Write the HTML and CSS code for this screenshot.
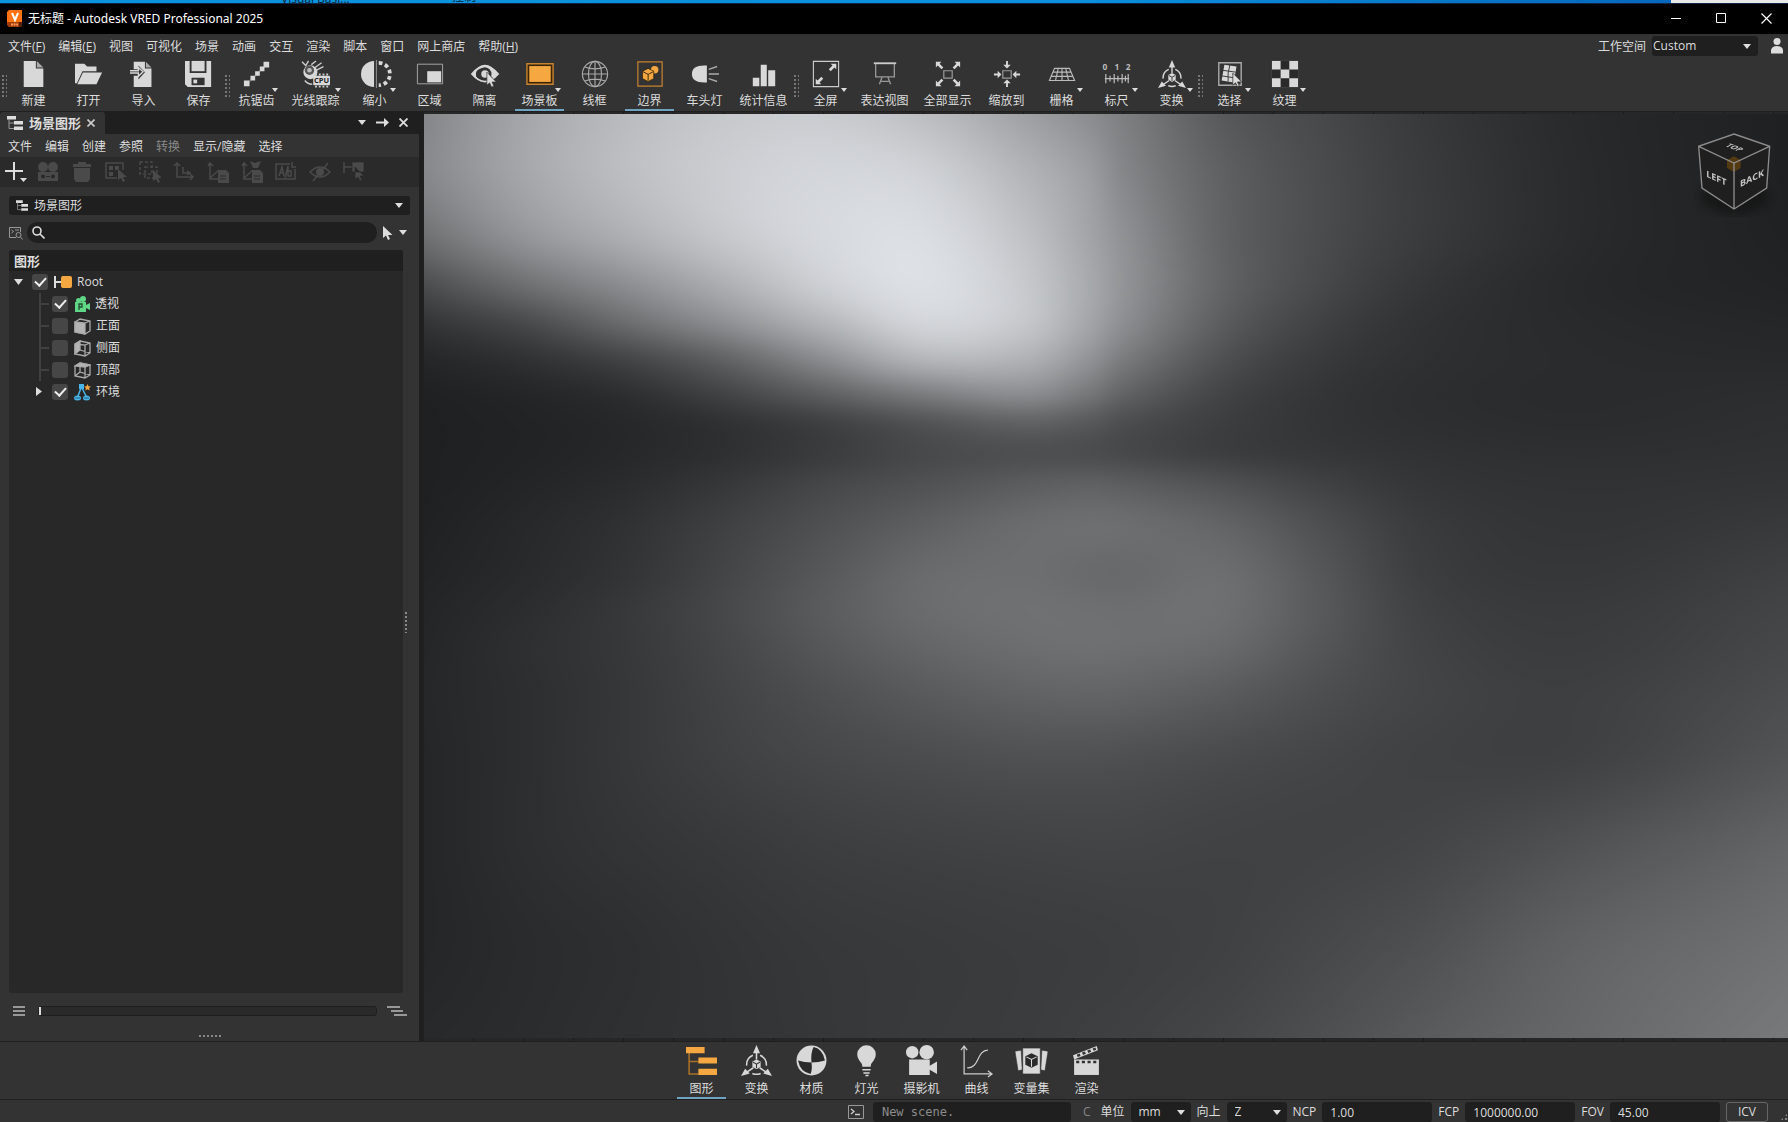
FILE: index.html
```html
<!DOCTYPE html>
<html lang="zh-CN">
<head>
<meta charset="utf-8">
<title>无标题 - Autodesk VRED Professional 2025</title>
<link rel="stylesheet" href="styles.css">
</head>
<body>
<svg class="defs" width="0" height="0" aria-hidden="true">
  <symbol id="i-transform" viewBox="0 0 30 30">
    <path d="M15 0l3.400 8h-6.800zM0 30l4-7 4.500 4.500zM30 30l-4-7-4.500 4.500z" fill="#d8d8d8"/>
    <path d="M15 7v7M6 26l6-4M24 26l-6-4" stroke="#d8d8d8" stroke-width="1.500"/>
    <path d="M11.500 10A10 10 0 0 0 5.500 20M18.500 10a10 10 0 0 1 6 10M11 27.500a10 10 0 0 0 8 0" fill="none" stroke="#d8d8d8" stroke-width="1.500"/>
    <path d="M15 14l4 2v5l-4 2.500-4-2.500v-5z" fill="#d8d8d8"/>
    <path d="M11.500 16.500l3.500 2 3.500-2M15 18.500v4" fill="none" stroke="#333" stroke-width="1"/>
  </symbol>
  <symbol id="i-tree" viewBox="0 0 16 14">
    <path d="M0 0h9v3.500H0zM7 5h9v3.500H7zM7 10.500h9V14H7z" fill="#ddd"/>
    <path d="M2 3v9.500h5M2 7h5" fill="none" stroke="#999"/>
  </symbol>
  <symbol id="i-cursor" viewBox="0 0 10 14">
    <path d="M0 0v12l3-2.500L5 14l2-1-2-4h4.500z" fill="currentColor"/>
  </symbol>
</svg>

<div class="app">
  <div class="desktop" aria-hidden="true"><span class="desk-a">Visual Basi...</span><span class="desk-b">控制</span><i class="desk-white"></i></div>

  <header class="titlebar">
    <svg class="logo" viewBox="0 0 15 17"><path d="M2 0h13v12H0V2z" fill="#ff7314"/><path d="M0 12h15v5H2l-2-2z" fill="#a33c08"/><path d="M12 12h3v5h-3z" fill="#5c1f04"/><path d="M5 3l3 7 3-7" fill="none" stroke="#fff" stroke-width="2"/><path d="M4 14.500h7" stroke="#ff9a55" stroke-width="2" stroke-dasharray="2 .6"/></svg>
    <h1>无标题 - Autodesk VRED Professional 2025</h1>
    <div class="winbtns">
      <button aria-label="最小化"><svg width="11" height="11" viewBox="0 0 11 11"><path d="M0 5.500h10" stroke="#fff"/></svg></button>
      <button aria-label="最大化"><svg width="11" height="11" viewBox="0 0 11 11"><path d="M.5.5h9v9h-9z" stroke="#fff" fill="none"/></svg></button>
      <button aria-label="关闭"><svg width="11" height="11" viewBox="0 0 11 11"><path d="M.5.5l10 10M10.500.5l-10 10" stroke="#fff" stroke-width="1.200"/></svg></button>
    </div>
  </header>

  <div class="menubar">
    <nav class="menu">
      <button>文件(<u>F</u>)</button><button>编辑(<u>E</u>)</button><button>视图</button><button>可视化</button><button>场景</button><button>动画</button><button>交互</button><button>渲染</button><button>脚本</button><button>窗口</button><button>网上商店</button><button>帮助(<u>H</u>)</button>
    </nav>
    <div class="workspace">
      <label for="ws">工作空间</label>
      <select id="ws"><option>Custom</option></select>
      <button class="user" aria-label="用户"><svg width="12" height="16" viewBox="0 0 12 16"><circle cx="6" cy="3.500" r="3.500" fill="#ddd"/><path d="M0 15.500V12q1-4 6-4t6 4v3.500z" fill="#ddd"/></svg></button>
    </div>
  </div>

  <div class="toolbar">
    <div class="group"><i class="grip"></i>
      <button class="tool"><svg viewBox="0 0 30 30"><path d="M4 1h13v8h8V29H4z" fill="#d8d8d8"/><path d="M18 1l7 7h-7z" fill="#aaa"/></svg>新建</button>
      <button class="tool"><svg viewBox="0 0 30 30"><path d="M0 4h10l3 3h10v5H8L2 25H0z" fill="#d8d8d8"/><path d="M8.500 13.500H29L23 26H2.500z" fill="#d8d8d8"/></svg>打开</button>
      <button class="tool"><svg viewBox="0 0 30 30"><path d="M4 2h12v7h7v20H4V17h5v4l7-8-7-7v4H4z" fill="#d8d8d8"/><path d="M17 2l6 6h-6z" fill="#aaa"/><path d="M0 11.500h9V8l5 4.500-5 5V14H0" fill="#333" stroke="#d8d8d8" stroke-width="1.500"/></svg>导入</button>
      <button class="tool"><svg viewBox="0 0 30 30"><path d="M0 1h5v13h18V1h5v28H3l-3-3z" fill="#d8d8d8"/><path d="M7 1h14v11H7z" fill="#d8d8d8"/><path d="M7 19h14v8H7z" fill="#333"/><path d="M9 21h4v4H9z" fill="#d8d8d8"/></svg>保存</button>
    </div>
    <div class="group"><i class="grip"></i>
      <button class="tool drop"><svg viewBox="0 0 30 30"><path d="M4 26L26 4" stroke="#555" stroke-width="2"/><path d="M1 22h6v6H1zM8 17h5v5H8zM13 12h5v5h-5zM18 7h5v5h-5zM22 2h6v6h-6z" fill="#d8d8d8"/></svg>抗锯齿</button>
      <button class="tool drop wide"><svg viewBox="0 0 30 30"><circle cx="9" cy="13" r="7.500" fill="#d8d8d8"/><circle cx="8" cy="11" r="5" fill="#555"/><circle cx="8" cy="11" r="2.500" fill="#bbb"/><path d="M0 2l4 4 3-5M10 5l5-4M14 8l7-5M15 11l8-4M3 22q3 4 8 4" fill="none" stroke="#ccc" stroke-width="1.500"/><rect x="12" y="17" width="18" height="10" rx="1" fill="#d8d8d8"/><path d="M14 15.500h14M14 28.500h14" stroke="#ccc" stroke-width="2" stroke-dasharray="2 2"/><text x="21" y="25" text-anchor="middle" class="cpu">CPU</text></svg>光线跟踪</button>
      <button class="tool drop"><svg viewBox="0 0 30 30"><path d="M14 1a14 14 0 0 0 0 28z" fill="#d8d8d8"/><path d="M16.500 0v30" stroke="#999"/><path d="M19 3a12 12 0 0 1 0 24" fill="none" stroke="#d8d8d8" stroke-width="4" stroke-dasharray="4 3"/></svg>缩小</button>
      <button class="tool"><svg viewBox="0 0 30 30"><path d="M1.500 4.500h27v21h-27z" fill="none" stroke="#aaa"/><path d="M12 12h15v12H12z" fill="#d8d8d8"/></svg>区域</button>
      <button class="tool"><svg viewBox="0 0 30 30"><path d="M1 15Q15-5 29 15q-2 3-5 5l-3-3a8 8 0 1 0-9 6Q6 22 1 15z" fill="#d8d8d8"/><path d="M1 15Q15-1 29 15Q15 31 1 15z" fill="none" stroke="#d8d8d8" stroke-width="2"/><circle cx="15" cy="15" r="7" fill="#333"/><circle cx="15" cy="15" r="4" fill="#d8d8d8"/><path d="M17 13v14l3-2.500 2 4.500 2.500-1-2-4.500h4.500z" fill="#ddd" stroke="#333" stroke-width=".7"/></svg>隔离</button>
      <button class="tool drop on"><svg viewBox="0 0 30 30"><path d="M1 4h28v22H1z" fill="#3a2508" stroke="#c78330" stroke-width="1.500"/><path d="M3.500 6.500h23v17h-23z" fill="#f5a742"/></svg>场景板</button>
      <button class="tool"><svg viewBox="0 0 30 30" fill="none" stroke="#aaa" stroke-width="1.200"><circle cx="15" cy="15" r="13.500"/><ellipse cx="15" cy="15" rx="7" ry="13.500"/><path d="M15 1v28M1 15h28M4 7.500q11 4 22 0M4 22.500q11-4 22 0"/></svg>线框</button>
      <button class="tool on"><svg viewBox="0 0 30 30"><path d="M2 2h26v26H2z" fill="none" stroke="#c78330" stroke-width="1.300"/><circle cx="20" cy="10.500" r="4" fill="#f5a742"/><path d="M13 9l6 3v8l-6 3-6-3v-8z" fill="#f5a742" stroke="#332408" stroke-width=".8"/><path d="M7.500 12.500l5.500 3 5.500-3M13 15.500V22" stroke="#332408" fill="none"/></svg>边界</button>
      <button class="tool"><svg viewBox="0 0 30 30"><path d="M17 6v18Q1 25 1 15T17 6z" fill="#d8d8d8"/><path d="M19 10l9-3M19 15h11M19 20l9 3" stroke="#aaa" stroke-width="1.500"/></svg>车头灯</button>
      <button class="tool wide"><svg viewBox="0 0 30 30"><path d="M3 19h7v9H3zM11.500 5H18v23h-6.500zM19.500 11H27v17h-7.500z" fill="#d8d8d8"/></svg>统计信息</button>
    </div>
    <div class="group"><i class="grip"></i>
      <button class="tool drop"><svg viewBox="0 0 30 30"><path d="M1.500 1.500h27v27h-27z" fill="none" stroke="#ccc" stroke-width="1.200"/><path d="M26 4v6l-2-2-4 4-2-2 4-4-2-2zM4 26v-6l2 2 4-4 2 2-4 4 2 2z" fill="#d8d8d8"/></svg>全屏</button>
      <button class="tool wide"><svg viewBox="0 0 30 30"><path d="M3 3.500h24" stroke="#ccc" stroke-width="2"/><path d="M5 4v14h20V4M12 18l-3 8M18 18l3 8M11 23h8" fill="none" stroke="#999" stroke-width="1.400"/></svg>表达视图</button>
      <button class="tool wide"><svg viewBox="0 0 30 30"><path d="M10.500 11.500h9v8h-9z" fill="none" stroke="#999" stroke-width="1.300"/><path d="M2 2h6L6 4l4 4-2 2-4-4-2 2zM28 2v6l-2-2-4 4-2-2 4-4-2-2zM2 28v-6l2 2 4-4 2 2-4 4 2 2zM28 28h-6l2-2-4-4 2-2 4 4 2-2z" fill="#d8d8d8"/></svg>全部显示</button>
      <button class="tool"><svg viewBox="0 0 30 30"><path d="M10.500 11.500h9v8h-9z" fill="none" stroke="#999" stroke-width="1.300"/><path d="M14 1h2v4h3l-4 4-4-4h3zM14 29h2v-4h3l-4-4-4 4h3zM1 14.500v2h4v3l4-4-4-4v3zM29 14.500v2h-4v3l-4-4 4-4v3z" fill="#d8d8d8"/></svg>缩放到</button>
      <button class="tool drop"><svg viewBox="0 0 30 30" fill="none" stroke="#bbb" stroke-width="1.200"><path d="M7 9h16l5.500 13h-27zM5 13h20M3.500 17.500h23M11 9L8 22M15 9v13M19 9l3 13"/></svg>栅格</button>
      <button class="tool drop"><svg viewBox="0 0 30 30"><text x="2" y="11" text-anchor="middle" class="ruler">0</text><text x="15" y="11" text-anchor="middle" class="ruler">1</text><text x="27" y="11" text-anchor="middle" class="ruler">2</text><path d="M2 20h26M3 15v10M7.500 17v6M12 15v10M16 17v6M20.500 15v10M27 15v10M24 17v6" stroke="#bbb" stroke-width="1.300"/></svg>标尺</button>
      <button class="tool drop"><svg><use href="#i-transform"/></svg>变换</button>
    </div>
    <div class="group"><i class="grip"></i>
      <button class="tool drop"><svg viewBox="0 0 30 30"><path d="M3 3h24v24H3z" fill="none" stroke="#aaa" stroke-width="1.500"/><path d="M9 5l13 2-3 17-13-2z" fill="#d8d8d8"/><path d="M15 5q-3 9-2 18M7 11l14 2M6 17l13 2" stroke="#333" fill="none"/><path d="M18 14v13l3-2.500 2 4 2-1-2-4h4.500z" fill="#ddd" stroke="#333" stroke-width=".8"/></svg>选择</button>
      <button class="tool drop"><svg viewBox="0 0 30 30"><path d="M1 1h28v28H1z" fill="#d8d8d8"/><path d="M10.300 1h9.300v9.300h-9.300zM1 10.300h9.300v9.300H1zM19.600 10.300H29v9.300h-9.400zM10.300 19.600h9.300V29h-9.300z" fill="#2a2a2a"/></svg>纹理</button>
    </div>
  </div>

  <main class="work">
    <aside class="panel">
      <div class="tabs">
        <div class="tab"><svg width="16" height="14"><use href="#i-tree"/></svg><b>场景图形</b><button aria-label="关闭标签"><svg width="8" height="8" viewBox="0 0 8 8"><path d="M.5.5l7 7M7.500.5l-7 7" stroke="#ccc" stroke-width="1.600"/></svg></button></div>
        <div class="tabctl">
          <button aria-label="选项"><svg width="8" height="5" viewBox="0 0 8 5"><path d="M0 0h8L4 5z" fill="#ddd"/></svg></button>
          <button aria-label="浮动"><svg width="13" height="9" viewBox="0 0 13 9"><path d="M0 3.500h8V0l5 4.500L8 9V5.500H0z" fill="#ddd"/></svg></button>
          <button aria-label="关闭面板"><svg width="9" height="9" viewBox="0 0 9 9"><path d="M.5.5l8 8M8.500.5l-8 8" stroke="#ddd" stroke-width="1.800"/></svg></button>
        </div>
      </div>
      <nav class="menu submenu"><button>文件</button><button>编辑</button><button>创建</button><button>参照</button><button disabled>转换</button><button>显示/隐藏</button><button>选择</button></nav>
      <div class="iconbar">
        <button class="add" aria-label="添加"><svg viewBox="0 0 22 22"><path d="M9 1v18M0 10h18" stroke="#ddd" stroke-width="2"/><path d="M15 17h7l-3.500 4z" fill="#ddd"/></svg></button>
        <button disabled aria-label="组"><svg viewBox="0 0 22 22"><circle cx="6" cy="6" r="5"/><circle cx="16" cy="6" r="5"/><path d="M1 11h20v9H1z"/><circle cx="6" cy="15.500" r="2" fill="#2a2a2a"/><circle cx="16" cy="15.500" r="2" fill="#2a2a2a"/><path d="M9 15.500h4" stroke="#2a2a2a"/></svg></button>
        <button disabled aria-label="删除"><svg viewBox="0 0 22 22"><path d="M7 1h8v2h5v3H2V3h5zM3 7h16v11l-2 3H5l-2-3z"/></svg></button>
        <button disabled aria-label="选择子项"><svg viewBox="0 0 22 22"><path d="M18 9V2H1v15h11" class="ln"/><path d="M4 5h4v4H4zM10 5h4v4h-4zM4 11h4v4H4zM13 8v11l3-2 2 4 2-1-2-4h4z"/></svg></button>
        <button disabled aria-label="选择"><svg viewBox="0 0 22 22"><path d="M1 1h12v12H1zM6 6h12v11H6z" class="ln dash"/><path d="M14 9v11l3-2 2 4 2-1-2-4h4z"/></svg></button>
        <button disabled aria-label="坐标"><svg viewBox="0 0 22 22"><path d="M4 2v14h15M1 5l3-3 3 3M17 13l3 3-3 3M10 6v6h6M14 10l3 2-3 2" class="ln"/></svg></button>
        <button disabled aria-label="复制坐标"><svg viewBox="0 0 22 22"><path d="M3 2v16h8M1 5l2-3 3 3M3 17l9-8" class="ln"/><path d="M11 9h8l3 3v10H11z"/><path d="M13 15h6M13 18h6" stroke="#2a2a2a"/></svg></button>
        <button disabled aria-label="粘贴坐标"><svg viewBox="0 0 22 22"><path d="M3 2v16h8M1 5l2-3 3 3M3 17l9-8" class="ln"/><path d="M9 0l5 2 6-2-3 7h-5zM11 9h8l3 3v10H11z"/><path d="M13 15h6M13 18h6" stroke="#2a2a2a"/></svg></button>
        <button disabled aria-label="重命名"><svg viewBox="0 0 22 22"><path d="M15 3H1v15h19V8M17 1v5h4" class="ln"/><path d="M4 15l3-9 2 9M5 12h4M10 17l3-12M13 6v9h3v-5h-3" class="ln"/></svg></button>
        <button disabled aria-label="隐藏"><svg viewBox="0 0 22 22"><path d="M1 11Q11 1 21 11Q11 21 1 11zM19 2L4 20" class="ln"/><circle cx="11" cy="11" r="4"/></svg></button>
        <button disabled aria-label="选择节点"><svg viewBox="0 0 22 22"><path d="M1 1v11M1 6h8" class="ln"/><path d="M9 1h12v10H9zM12 6v12l3-2 2 4 2-1-2-4h4z" stroke="#2a2a2a" stroke-width=".7"/></svg></button>
      </div>
      <div class="panelbody">
        <div class="combo"><svg width="12" height="11"><use href="#i-tree"/></svg><select aria-label="视图"><option>场景图形</option></select></div>
        <div class="search">
          <svg width="14" height="14" viewBox="0 0 14 14" fill="none" stroke="#999"><path d="M7 11.500H.5V1.500h11V6M2.500 4l2 1.500-2 1.500M6 4h4"/><circle cx="9.500" cy="9" r="2.500"/><path d="M11.500 11l2 2.500"/></svg>
          <label class="searchbox"><svg width="13" height="13" viewBox="0 0 13 13" fill="none" stroke="#ddd" stroke-width="1.600"><circle cx="5" cy="5" r="4"/><path d="M8 8l4.500 4.500"/></svg><input type="text" aria-label="搜索"></label>
          <button aria-label="选择模式"><svg width="10" height="14" class="light"><use href="#i-cursor"/></svg><svg width="8" height="5" viewBox="0 0 8 5"><path d="M0 0h8L4 5z" fill="#ddd"/></svg></button>
        </div>
        <div class="treewrap">
          <section class="tree">
            <h2>图形</h2>
            <ul>
              <li class="root"><svg class="caret" width="9" height="6" viewBox="0 0 9 6"><path d="M0 0h9L4.500 6z" fill="#ddd"/></svg><label><input type="checkbox" checked><svg width="18" height="14" viewBox="0 0 18 14"><path d="M1 1v12M1 7h6" stroke="#ddd" stroke-width="2"/><rect x="7" y="1" width="11" height="12" rx="2" fill="#f5a742"/></svg>Root</label>
                <ul>
                  <li><label><input type="checkbox" checked><svg width="16" height="17" viewBox="0 0 16 17"><circle cx="4.500" cy="4.500" r="2.500" fill="#5fd787"/><circle cx="9" cy="3" r="3" fill="#5fd787"/><path d="M1 6h11v3l4-2v7l-4-2v4H1z" fill="#5fd787"/><path d="M5 14V8h3v3H5" fill="none" stroke="#1f4a2c" stroke-width="1.300"/></svg>透视</label></li>
                  <li><label><input type="checkbox"><svg width="17" height="17" viewBox="0 0 17 17" fill="none" stroke="#aaa" stroke-width="1.300"><path d="M1 4l5-3 10 2v10l-5 3L1 14zM11 5l5-2"/><path d="M1 4l10 1v11L1 14z" fill="#b4b4b4"/></svg>正面</label></li>
                  <li><label><input type="checkbox"><svg width="17" height="17" viewBox="0 0 17 17" fill="none" stroke="#aaa" stroke-width="1.300"><path d="M1 4l5-3 10 2v10l-5 3L1 14zM1 4l10 1v11M11 5l5-2M6 10l10 3"/><path d="M1 4l5-3v9l-5 4z" fill="#b4b4b4"/></svg>侧面</label></li>
                  <li><label><input type="checkbox"><svg width="17" height="17" viewBox="0 0 17 17" fill="none" stroke="#aaa" stroke-width="1.300"><path d="M1 4l5-3 10 2v10l-5 3L1 14zM11 5v11M6 5v5l10 3M6 10l-5 4"/><path d="M1 4l5-3 10 2-5 2z" fill="#b4b4b4"/></svg>顶部</label></li>
                  <li class="closed"><svg class="caret" width="6" height="9" viewBox="0 0 6 9"><path d="M0 0v9l6-4.500z" fill="#ddd"/></svg><label><input type="checkbox" checked><svg width="17" height="17" viewBox="0 0 17 17"><path d="M7 4L4 12M8 4l4 8" stroke="#49b5e8" stroke-width="1.500"/><path d="M5 0h5v5H5z" fill="#49b5e8"/><ellipse cx="3.500" cy="14" rx="3.500" ry="2.500" fill="#49b5e8"/><ellipse cx="12.500" cy="14" rx="3.500" ry="2.500" fill="#49b5e8"/><path d="M1 14h5M10 14h5" stroke="#216080"/><path d="M13.500 0l1 2.200 2.500.2-1.900 1.600.6 2.500-2.200-1.300-2.200 1.300.6-2.500L10 2.400l2.500-.2z" fill="#f5a742"/></svg>环境</label></li>
                </ul>
              </li>
            </ul>
          </section>
          <i class="vgrip"></i>
        </div>
        <div class="sliderrow">
          <svg width="12" height="10" viewBox="0 0 12 10" stroke="#bbb" stroke-width="1.500"><path d="M0 1h12M0 5h12M0 9h12"/></svg>
          <input type="range" min="0" max="100" value="0" aria-label="层级">
          <svg width="20" height="10" viewBox="0 0 20 10" stroke="#bbb" stroke-width="1.500"><path d="M0 1h13M4 5h12M7 9h13"/></svg>
        </div>
        <i class="hgrip"></i>
      </div>
    </aside>
    <section class="viewport">
      <canvas id="scene" width="682" height="462"></canvas>
      <svg class="cube" viewBox="1050 380 264 270">
        <ellipse cx="1184" cy="590" rx="100" ry="50" class="shade"/>
        <path d="M1182 401l107 37-9 125-98 63-96-63-10-125z" fill="#1f1f1f"/>
        <path d="M1182 468l20 11v24l-20 12-21-12v-24z" fill="#543a10"/>
        <path d="M1182 401l107 37-9 125-98 63-96-63-10-125zM1076 438l106 50 107-50M1182 488v138" fill="none" stroke="#8c8c8c" stroke-width="4"/>
        <text transform="translate(1129 543) skewY(24)" text-anchor="middle">LEFT</text>
        <text transform="translate(1236 543) skewY(-26)" text-anchor="middle">BACK</text>
        <text transform="matrix(.8 .3 -.8 .45 1176 446)" text-anchor="middle">TOP</text>
      </svg>
    </section>
  </main>

  <div class="modules">
    <button class="tool on"><svg viewBox="0 0 30 30"><path d="M3 6v22h10M3 16h10" fill="none" stroke="#a97128" stroke-width="1.500"/><path d="M0 2h18v6H0zM12 12h18v6H12zM12 23h18v6H12z" fill="#f5a742"/></svg>图形</button>
    <button class="tool"><svg><use href="#i-transform"/></svg>变换</button>
    <button class="tool"><svg viewBox="0 0 30 30"><circle cx="15" cy="15" r="14.500" fill="#d8d8d8"/><path d="M15 17Q14 8 17 2Q26 4 28 15q-6 2-13 2zM15 17q1 7-1 11Q4 26 2 15q6 2 13 2z" fill="#2a2a2a"/></svg>材质</button>
    <button class="tool"><svg viewBox="0 0 30 30"><path d="M11 21q0-3-3-6A9 9 0 1 1 22 15q-3 3-3 6z" fill="#d8d8d8"/><path d="M11 24h8M12 27h6M14 29.500h3" stroke="#d8d8d8" stroke-width="1.500"/></svg>灯光</button>
    <button class="tool"><svg viewBox="0 0 30 30"><circle cx="6" cy="7" r="6" fill="#d8d8d8"/><circle cx="20" cy="7" r="7" fill="#d8d8d8"/><path d="M3 14h20v6l7-4v12l-7-4v5H3z" fill="#d8d8d8"/></svg>摄影机</button>
    <button class="tool"><svg viewBox="0 0 30 30" fill="none" stroke="#ccc" stroke-width="1.200"><path d="M3 2v26h26M0 5l3-4 3 4M26 25l4 3-4 3M6 22c12 1 9-17 20-17"/></svg>曲线</button>
    <button class="tool"><svg viewBox="0 0 30 30"><path d="M-1 6l6-1 1 19-4 1zM31 6l-6-1-1 19 4 1zM6.500 3h17v25h-17z" fill="#d8d8d8" stroke="#333" stroke-width=".6"/><path d="M15 8l6 3v8l-6 3-6-3v-8z" fill="#2a2a2a"/><path d="M10 11.500l5 2.500 5-2.500M15 14v7" fill="none" stroke="#d8d8d8"/></svg>变量集</button>
    <button class="tool"><svg viewBox="0 0 30 30"><path d="M3 14h24v15H3z" fill="#d8d8d8"/><path d="M2 10L25 1l1 4L3 14z" fill="#d8d8d8"/><path d="M5 16.500h20M6 10.500l18-7" stroke="#333" stroke-width="2.500" stroke-dasharray="3 2.500"/></svg>渲染</button>
  </div>

  <footer class="status">
    <button class="term" aria-label="终端"><svg width="16" height="14" viewBox="0 0 16 14" fill="none" stroke="#999"><path d="M.5.5h15v13H.5z"/><path d="M3 4l3 2.500L3 9M7 9.500h5" stroke="#ccc" stroke-width="1.300"/></svg></button>
    <input class="log" type="text" value="New scene." readonly aria-label="日志">
    <span class="dim">C</span>
    <label for="unit">单位</label><select id="unit"><option>mm</option></select>
    <label for="up">向上</label><select id="up"><option>Z</option></select>
    <label for="ncp">NCP</label><input id="ncp" type="text" value="1.00">
    <label for="fcp">FCP</label><input id="fcp" type="text" value="1000000.00">
    <label for="fov">FOV</label><input id="fov" type="text" value="45.00">
    <button class="icv">ICV</button>
    <i class="sizegrip"></i>
  </footer>
</div>
<script src="scene.js"></script>
</body>
</html>
```
FILE: styles.css
```css
* { box-sizing: border-box; }
body {
  margin: 0;
  background: #333;
  color: #ddd;
  font: 12px/16px "Open Sans", "Noto Sans CJK SC", sans-serif;
}
button, input, select { font: inherit; color: inherit; margin: 0; padding: 0; border: 0; background: none; outline: 0; }
button { display: flex; align-items: center; justify-content: center; white-space: nowrap; }
ul { list-style: none; margin: 0; padding: 0; }
svg { display: block; flex: none; }
.defs { position: absolute; }
.light { color: #ddd; }
select {
  appearance: none;
  background: #1f1f1f url("data:image/svg+xml,%3Csvg xmlns='http://www.w3.org/2000/svg' width='8' height='5'%3E%3Cpath d='M0 0h8L4 5z' fill='%23ddd'/%3E%3C/svg%3E") no-repeat right 6px center;
  border-radius: 3px;
}
.app { display: flex; flex-direction: column; height: 100vh; overflow: hidden; }

/* desktop edge showing above the window */
.desktop { position: relative; display: flex; height: 4px; overflow: hidden; background: linear-gradient(90deg, #0a94de, #0a90dc 60%, #0560b8); color: #06283c; border-bottom: 1px solid #124; line-height: 16px; }
.desk-a { position: absolute; left: 281px; bottom: -4px; }
.desk-b { position: absolute; left: 452px; bottom: -2px; }
.desk-white { width: 117px; margin-left: auto; background: #e8e8e8; }

.titlebar { display: flex; align-items: center; height: 30px; background: #000; padding: 0 0 2px 7px; }
.logo { width: 15px; height: 17px; }
h1 { margin: 2px 0 0 6px; font: 400 12px/16px "Noto Sans", "Noto Sans CJK SC", sans-serif; color: #fff; }
.winbtns { display: flex; gap: 2px; margin-left: auto; }
.winbtns button { width: 43px; height: 24px; }

.menubar { display: flex; justify-content: space-between; height: 24px; padding: 0 5px 0 8px; }
.menu { display: flex; align-items: center; gap: 13px; }
.menubar .menu { padding-top: 1px; }
.menu button:disabled { color: #888; }
.workspace { display: flex; align-items: center; }
.workspace select { width: 106px; height: 20px; margin: 0 13px 0 6px; padding-left: 1px; background-position: right 7px center; }
.workspace label { padding-top: 2px; }

.toolbar { display: flex; height: 54px; padding-top: 1px; border-bottom: 1px solid #1f1f1f; }
.group { display: flex; gap: 6px; }
.grip { width: 6px; height: 23px; margin: 15px -4px 0 1px; background: radial-gradient(circle, #777 1px, transparent 1px) 0 0 / 4px 4px; }
.tool { position: relative; flex-direction: column; justify-content: flex-start; width: 49px; height: 52px; border-bottom: 2px solid transparent; }
.toolbar .tool svg { width: 28px; height: 28px; margin: 1px 0 5px; overflow: visible; }
.tool.wide { width: 57px; }
.tool.on { border-bottom-color: #6fa3c0; }
.drop::after { content: ""; position: absolute; right: 3px; top: 29px; border: 3px solid transparent; border-top: 4px solid #ddd; border-bottom: 0; }
.cpu { font: bold 8px "Open Sans", sans-serif; fill: #222; }
.ruler { font: bold 9px "Open Sans", sans-serif; fill: #bbb; }

.work { display: flex; flex: 1; min-height: 0; background: #1f1f1f; }
.panel { display: flex; flex-direction: column; width: 419px; flex: none; background: #333; }
.tabs { display: flex; justify-content: space-between; height: 22px; background: #1f1f1f; }
.tab { display: flex; align-items: center; gap: 6px; width: 105px; padding-left: 7px; background: #333; border-radius: 3px 3px 0 0; font-size: 13px; }
.tabctl { display: flex; align-items: center; gap: 10px; padding: 0 11px 2px 0; }
.submenu { height: 23px; padding: 2px 8px 0; }
.iconbar { display: flex; align-items: center; gap: 12px; height: 30px; padding: 0 5px; background: #2a2a2a; }
.iconbar .add { margin-right: -2px; }
.iconbar svg { width: 22px; height: 22px; fill: #4a4a4a; }
.iconbar .ln { fill: none; stroke: #4a4a4a; stroke-width: 1.5; }
.iconbar .dash { stroke-dasharray: 3 2; }
.panelbody { display: flex; flex-direction: column; flex: 1; padding: 9px 9px 0; }
.combo { display: flex; align-items: center; height: 19px; padding-left: 7px; background: #1f1f1f; border-radius: 3px; }
.combo select { flex: 1; height: 19px; padding-left: 6px; background-position: right 7px center; }
.search { display: flex; align-items: center; gap: 4px; height: 21px; margin: 7px 0; }
.searchbox { display: flex; flex: 1; align-items: center; gap: 6px; height: 21px; padding: 0 5px; border-radius: 11px; background: #1f1f1f; }
.searchbox input { flex: 1; min-width: 0; }
.search button { gap: 6px; padding: 0 3px 0 2px; }
.treewrap { display: flex; flex: 1; align-items: center; margin-right: -4px; }
.tree { flex: 1; align-self: stretch; background: #282828; border-radius: 3px; overflow: hidden; }
.vgrip { width: 4px; height: 22px; margin: 0 6px 0 1px; background: radial-gradient(circle, #888 1px, transparent 1px) 0 0 / 4px 4px; }
h2 { margin: 0; height: 21px; padding: 3px 5px 2px; font-size: 13px; line-height: 16px; background: #1f1f1f; }
.root { padding-left: 23px; position: relative; }
.tree label { display: flex; align-items: center; gap: 6px; height: 22px; }
.tree li li { position: relative; padding-left: 20px; }
.tree label > svg { margin-right: -1px; }
.tree li li::before { content: ""; position: absolute; left: 7px; top: 0; width: 8px; height: 22px; border-left: 2px solid #404040; background: linear-gradient(#404040, #404040) 0 10px / 8px 2px no-repeat; }
.tree li li.closed::before { display: none; }
.caret { position: absolute; left: 5px; top: 8px; }
.closed .caret { left: 4px; top: 6px; }
input[type="checkbox"] { appearance: none; width: 16px; height: 16px; border-radius: 3px; background: #464646; flex: none; display: grid; place-items: center; }
input[type="checkbox"]:checked::before { content: ""; width: 5px; height: 9px; margin-top: -3px; border: solid #eee; border-width: 0 2px 2px 0; transform: rotate(42deg); }
.sliderrow { display: flex; align-items: center; gap: 10px; height: 36px; padding: 0 3px 0 4px; }
.sliderrow input { appearance: none; flex: 1; min-width: 0; height: 10px; margin: 0 0 0 3px; border: 1px solid #1f1f1f; border-radius: 3px; background: #2a2a2a; }
.sliderrow input::-webkit-slider-thumb { appearance: none; width: 2px; height: 8px; background: #ddd; }
.hgrip { width: 24px; height: 4px; margin: 5px auto 3px; background: radial-gradient(circle, #888 1px, transparent 1px) 0 0 / 4px 4px; }
.viewport { position: relative; flex: 1; min-width: 0; margin-left: 5px; padding: 2px 0 3px; background: repeating-linear-gradient(90deg, #272727 0 49px, #1a1a1a 49px 50px); }
.viewport canvas { display: block; width: 100%; height: 100%; }
.cube { position: absolute; right: 10px; top: 15px; width: 88px; height: 90px; }
.cube text { font: 700 27px "Open Sans", sans-serif; fill: #c4c4c4; }
.shade { fill: #111; opacity: .6; filter: blur(12px); }

.modules { display: flex; justify-content: center; gap: 6px; height: 59px; border-top: 1px solid #1f1f1f; border-bottom: 1px solid #1f1f1f; }
.modules .tool { height: 57px; }
.modules .tool svg { width: 31px; height: 31px; margin: 3px 0 5px; overflow: visible; }

.status { display: flex; align-items: center; justify-content: flex-end; gap: 6px; height: 22px; padding-top: 2px; }
.status input, .status select { height: 20px; background-color: #1f1f1f; border-radius: 3px; }
.status input { width: 110px; padding-left: 8px; }
.status select { width: 60px; padding-left: 8px; }
.status .log { width: 198px; margin: 0 6px 0 3px; padding-left: 9px; color: #8c8c8c; font-family: "DejaVu Sans Mono", monospace; }
.dim { color: #888; margin-right: 4px; }
.icv { width: 42px; height: 20px; border: 1px solid #666; border-radius: 3px; }
.sizegrip { width: 8px; height: 8px; margin: 10px 0 0 6px; background: radial-gradient(circle, #888 1px, transparent 1px) 0 0 / 4px 4px; clip-path: polygon(100% 0, 100% 100%, 0 100%); }
```
FILE: scene.js
```js
// Soft studio lighting of the empty scene: brightness at a grid of
// positions, interpolated smoothly over the canvas.
const W = 1364, H = 923;
const xs = [0, 100, 200, 300, 400, 500, 600, 664, 700, 800, 900, 1000, 1150, 1364];
const rows = [
  [0,   133, 164, 185, 198, 201, 188, 159, 139, 125, 88, 71, 56, 41, 31],
  [58,  134, 165, 188, 203, 211, 207, 179, 156, 133, 95, 74, 58, 42, 31],
  [120, 112, 148, 174, 198, 214, 218, 192, 163, 143, 97, 74, 58, 42, 32],
  [170, 76, 110, 140, 173, 205, 220, 199, 168, 146, 98, 71, 53, 40, 34],
  [208, 52, 73, 107, 142, 180, 210, 197, 164, 140, 91, 64, 49, 41, 37],
  [244, 38, 49, 68, 98, 140, 180, 176, 146, 122, 79, 57, 47, 42, 40],
  [279, 32, 37, 46, 67, 95, 124, 139, 118, 98, 67, 52, 45, 42, 44],
  [308, 31, 34, 39, 49, 64, 83, 97, 88, 77, 61, 51, 46, 43, 46],
  [338, 31, 34, 39, 47, 59, 72, 78, 76, 72, 61, 54, 49, 46, 48],
  [371, 31, 36, 43, 55, 70, 81, 92, 96, 93, 81, 65, 53, 49, 51],
  [409, 32, 39, 48, 63, 79, 94, 106, 109, 108, 98, 77, 58, 51, 56],
  [459, 34, 41, 51, 68, 87, 105, 109, 105, 104, 108, 85, 61, 54, 63],
  [496, 36, 44, 55, 71, 90, 106, 111, 110, 109, 109, 87, 64, 57, 67],
  [533, 37, 46, 55, 69, 86, 100, 108, 110, 109, 104, 84, 66, 59, 70],
  [579, 38, 45, 54, 66, 78, 89, 97, 99, 98, 90, 77, 67, 62, 75],
  [646, 37, 45, 54, 63, 70, 75, 79, 79, 78, 73, 68, 64, 64, 83],
  [729, 37, 45, 51, 56, 61, 64, 66, 67, 67, 65, 65, 68, 80, 99],
  [829, 37, 42, 46, 51, 55, 57, 59, 60, 61, 64, 71, 79, 96, 111],
  [923, 40, 43, 47, 50, 54, 57, 59, 62, 63, 69, 78, 89, 102, 119]
];

function curve(ps, vs, p) {
  let i = 0;
  while (i < ps.length - 2 && p > ps[i + 1]) i++;
  const slope = k => {
    const a = Math.max(k - 1, 0), b = Math.min(k + 1, ps.length - 1);
    return (vs[b] - vs[a]) / (ps[b] - ps[a]);
  };
  const h = ps[i + 1] - ps[i], t = (p - ps[i]) / h, t2 = t * t, t3 = t2 * t;
  return vs[i] * (2 * t3 - 3 * t2 + 1) + h * slope(i) * (t3 - 2 * t2 + t)
    + vs[i + 1] * (3 * t2 - 2 * t3) + h * slope(i + 1) * (t3 - t2);
}

const canvas = document.getElementById('scene');
const ctx = canvas.getContext('2d');
const img = ctx.createImageData(canvas.width, canvas.height);
const ys = rows.map(r => r[0]);
for (let x = 0; x < canvas.width; x++) {
  const column = rows.map(r => curve(xs, r.slice(1), x / (canvas.width - 1) * W));
  for (let y = 0; y < canvas.height; y++) {
    const v = curve(ys, column, y / (canvas.height - 1) * H);
    const o = (y * canvas.width + x) * 4;
    img.data[o] = v;
    img.data[o + 1] = v + 1 + v * v / 24000;
    img.data[o + 2] = v + 2 + v * v / 9000;
    img.data[o + 3] = 255;
  }
}
ctx.putImageData(img, 0, 0);
```
